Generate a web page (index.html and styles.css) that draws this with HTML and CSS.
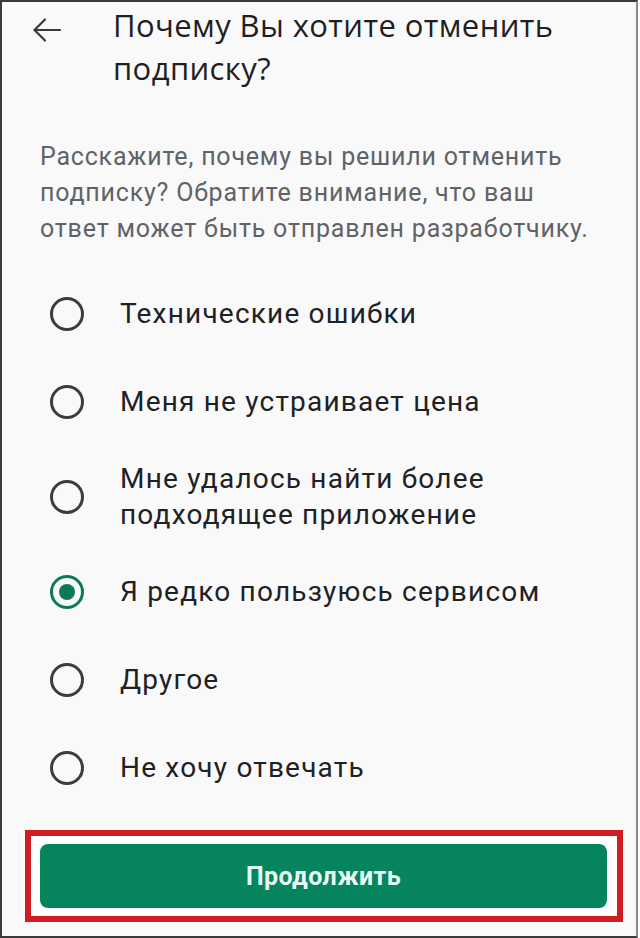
FILE: index.html
```html
<!DOCTYPE html>
<html lang="ru">
<head>
<meta charset="utf-8">
<link rel="stylesheet" href="styles.css">
</head>
<body>
<div class="screen">
  <header class="header">
    <svg class="back" width="30" height="26" viewBox="0 0 30 26" aria-hidden="true">
      <path d="M28 13H3M13 2.5L2.5 13L13 23.5" fill="none" stroke="#3a3a3a" stroke-width="2.2" stroke-linecap="round" stroke-linejoin="miter"/>
    </svg>
    <h1 class="title">Почему Вы хотите отменить подписку?</h1>
  </header>
  <p class="desc">Расскажите, почему вы решили отменить<br>подписку? Обратите внимание, что ваш<br>ответ может быть отправлен разработчику.</p>
  <ul class="options">
    <li class="option"><span class="radio"></span><span class="label">Технические ошибки</span></li>
    <li class="option"><span class="radio"></span><span class="label">Меня не устраивает цена</span></li>
    <li class="option"><span class="radio"></span><span class="label">Мне удалось найти более подходящее приложение</span></li>
    <li class="option"><span class="radio radio-on"></span><span class="label">Я редко пользуюсь сервисом</span></li>
    <li class="option"><span class="radio"></span><span class="label">Другое</span></li>
    <li class="option"><span class="radio"></span><span class="label">Не хочу отвечать</span></li>
  </ul>
  <div class="highlight">
    <button class="continue">Продолжить</button>
  </div>
</div>
</body>
</html>
```

FILE: styles.css
```css
html, body {
  margin: 0;
  padding: 0;
  background: #ffffff;
}
.screen {
  width: 638px;
  height: 938px;
  box-sizing: border-box;
  border-top: 2px solid #3a3a3a;
  border-left: 2px solid #3a3a3a;
  border-right: 2px solid #8a8a8a;
  border-bottom: 2px solid #3a3a3a;
  background: #f9f9f9;
  display: flex;
  flex-direction: column;
  font-family: Roboto, "Noto Sans", sans-serif;
}
.header {
  display: flex;
  align-items: flex-start;
  padding: 2px 16px 0 30px;
}
.back {
  flex: none;
  margin-top: 13px;
}
.title {
  margin: 0 0 0 51px;
  font-family: "Open Sans", Roboto, sans-serif;
  font-weight: 400;
  font-size: 31px;
  line-height: 43px;
  color: #1f1f1f;
  letter-spacing: 0.4px;
}
.desc {
  margin: 49px 0 0 0;
  padding: 0 16px 0 38px;
  font-size: 25px;
  line-height: 36px;
  color: #5f6368;
  letter-spacing: 0.8px;
  white-space: nowrap;
}
.options {
  list-style: none;
  margin: 23px 0 0 0;
  padding: 0;
}
.option {
  display: flex;
  align-items: center;
  min-height: 88px;
  box-sizing: border-box;
  padding: 15px 24px 15px 48px;
}
.radio {
  flex: none;
  width: 34px;
  height: 34px;
  box-sizing: border-box;
  border: 3px solid #3c3c3c;
  border-radius: 50%;
  display: flex;
  align-items: center;
  justify-content: center;
}
.radio-on {
  border-color: #0a7a58;
}
.radio-on::after {
  content: "";
  width: 16px;
  height: 16px;
  border-radius: 50%;
  background: #0a7a58;
}
.label {
  margin-left: 36px;
  font-size: 28px;
  line-height: 36px;
  color: #202124;
  letter-spacing: 1.2px;
}
.highlight {
  margin: 18px 0 0 23px;
  width: 598px;
  height: 92px;
  box-sizing: border-box;
  border: 6px solid #cf1d25;
  background: #ffffff;
  padding: 8px 10px 8px 9px;
  display: flex;
}
.continue {
  flex: 1;
  border: none;
  border-radius: 8px;
  background: #06845e;
  color: #e8fbf2;
  font-family: Roboto, sans-serif;
  font-weight: 700;
  font-size: 25px;
  letter-spacing: 0.4px;
}
```
